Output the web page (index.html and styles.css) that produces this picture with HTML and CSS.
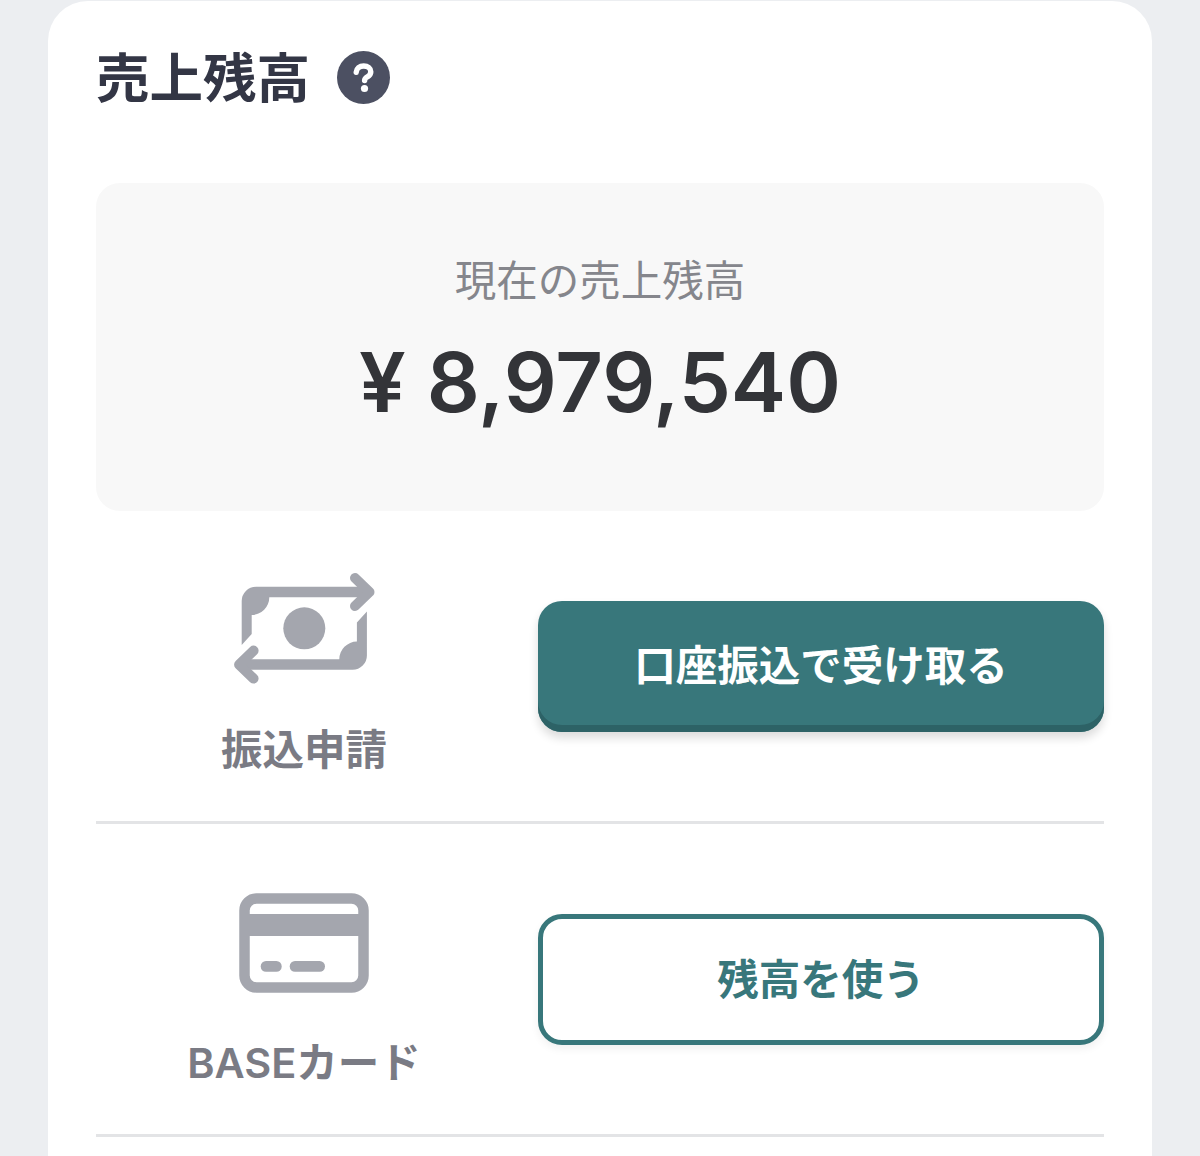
FILE: index.html
```html
<!DOCTYPE html>
<html lang="ja">
<head>
<meta charset="utf-8">
<title>売上残高</title>
<link rel="stylesheet" href="styles.css">
</head>
<body>
<main class="card">
  <header class="title-row">
    <h1 class="title">売上残高</h1>
    <svg class="help" viewBox="0 0 53 53" aria-hidden="true">
      <circle cx="26.5" cy="26.5" r="26.5" fill="#4c5062"/>
      <path d="M19.2 21.2c.3-4 3.400-6.200 7.500-6.200 4.200 0 7.100 2.300 7.100 5.700 0 2.500-1.300 3.900-3.400 5.100-1.800 1.100-2.800 1.900-2.800 3.700" fill="none" stroke="#fff" stroke-width="5.400" stroke-linecap="round"/>
      <circle cx="27.500" cy="37.500" r="3.600" fill="#fff"/>
    </svg>
  </header>
  <section class="summary">
    <p class="summary-label">現在の売上残高</p>
    <p class="summary-amount">¥ 8,979,540</p>
  </section>
  <section class="row row-transfer">
    <div class="row-side">
      <svg class="icon icon-money" viewBox="0 0 150 120" aria-hidden="true">
        <circle cx="74.300" cy="58.300" r="21" fill="#a4a6ae"/>
        <g>
          <path d="M11.700 75 21.700 64V45A17.700 17.700 0 0 0 39.300 27.300H135V16.800H26A14.300 14.300 0 0 0 11.700 31.100Z" fill="#a4a6ae"/>
          <path d="M125 8 139.500 22 125 36" fill="none" stroke="#a4a6ae" stroke-width="10" stroke-linecap="round" stroke-linejoin="round"/>
        </g>
        <g transform="rotate(180 74.300 58.300)">
          <path d="M11.700 75 21.700 64V45A17.700 17.700 0 0 0 39.300 27.300H135V16.800H26A14.300 14.300 0 0 0 11.700 31.100Z" fill="#a4a6ae"/>
          <path d="M125 8 139.500 22 125 36" fill="none" stroke="#a4a6ae" stroke-width="10" stroke-linecap="round" stroke-linejoin="round"/>
        </g>
      </svg>
      <span class="row-label">振込申請</span>
    </div>
    <button class="btn btn-primary" type="button">口座振込で受け取る</button>
  </section>
  <section class="row row-card">
    <div class="row-side">
      <svg class="icon icon-card" viewBox="0 0 130 100" aria-hidden="true">
        <rect x="5.500" y="5.500" width="119" height="89" rx="12" fill="none" stroke="#a4a6ae" stroke-width="10.500"/>
        <rect x="8" y="21" width="114" height="22" fill="#a4a6ae"/>
        <rect x="21.700" y="68" width="21" height="10.700" rx="5.300" fill="#a4a6ae"/>
        <rect x="50.700" y="68" width="35.300" height="10.700" rx="5.300" fill="#a4a6ae"/>
      </svg>
      <span class="row-label">BASEカード</span>
    </div>
    <button class="btn btn-outline" type="button">残高を使う</button>
  </section>
</main>
</body>
</html>
```
FILE: styles.css
```css
* {
  box-sizing: border-box;
}

html,
body {
  margin: 0;
  height: 1156px;
  overflow: hidden;
}

body {
  background: #eceef1;
  font-family: "Inter", "Noto Sans CJK JP", sans-serif;
}

.card {
  margin: 1px 48px 0;
  padding: 50px 48px 0;
  height: 1155px;
  overflow: hidden;
  background: #fff;
  border-radius: 40px 40px 0 0;
}

.title-row {
  display: flex;
  align-items: center;
  gap: 27px;
  height: 53px;
}

.title {
  margin: 0;
  padding-bottom: 6px;
  font-family: "Noto Sans CJK JP", sans-serif;
  font-size: 53.500px;
  font-weight: 700;
  line-height: 53px;
  color: #333645;
}

.help {
  width: 53px;
  height: 53px;
  flex: none;
}

.summary {
  margin-top: 79px;
  height: 328px;
  padding-top: 69px;
  background: #f8f8f8;
  border-radius: 24px;
  text-align: center;
}

.summary-label {
  margin: 0;
  font-family: "Noto Sans CJK JP", sans-serif;
  font-size: 41.500px;
  line-height: 52px;
  color: #85868c;
}

.summary-amount {
  margin: 28px 0 0;
  font-size: 83px;
  font-weight: 600;
  line-height: 100px;
  color: #333438;
}

.row {
  display: grid;
  grid-template-columns: 416px 1fr;
  gap: 26px;
  align-items: center;
  height: 313px;
  border-bottom: 3px solid #e3e4e6;
}

.row-side {
  display: flex;
  flex-direction: column;
  align-items: center;
}

.row-transfer .row-side {
  padding-top: 11px;
}

.row-card .row-side {
  padding-top: 23px;
}

.row-label {
  font-family: "Noto Sans CJK JP", sans-serif;
  font-size: 41.500px;
  font-weight: 700;
  line-height: 52px;
  color: #7a7b84;
}

.row-card .row-label {
  font-family: "Inter", "Noto Sans CJK JP", sans-serif;
  font-size: 41.500px;
  font-weight: 600;
}

.icon {
  display: block;
  flex: none;
}

.icon-money {
  width: 150px;
  height: 120px;
  margin: 0 0 31px 2px;
}

.icon-card {
  width: 130px;
  height: 100px;
  margin-bottom: 44px;
}

.btn {
  display: block;
  width: 100%;
  height: 131px;
  padding: 0;
  border-radius: 24px;
  font-family: "Noto Sans CJK JP", sans-serif;
  font-size: 41.500px;
  font-weight: 700;
}

.btn-primary {
  border: 0;
  padding-bottom: 6px;
  background: #38777b;
  color: #fff;
  box-shadow: inset 0 -7px 0 #2d6266, 0 6px 10px rgba(0, 0, 0, 0.14);
}

.btn-outline {
  border: 5px solid #38777b;
  padding-bottom: 4px;
  background: #fff;
  color: #38777b;
  box-shadow: 0 4px 8px rgba(0, 0, 0, 0.06);
}
```
